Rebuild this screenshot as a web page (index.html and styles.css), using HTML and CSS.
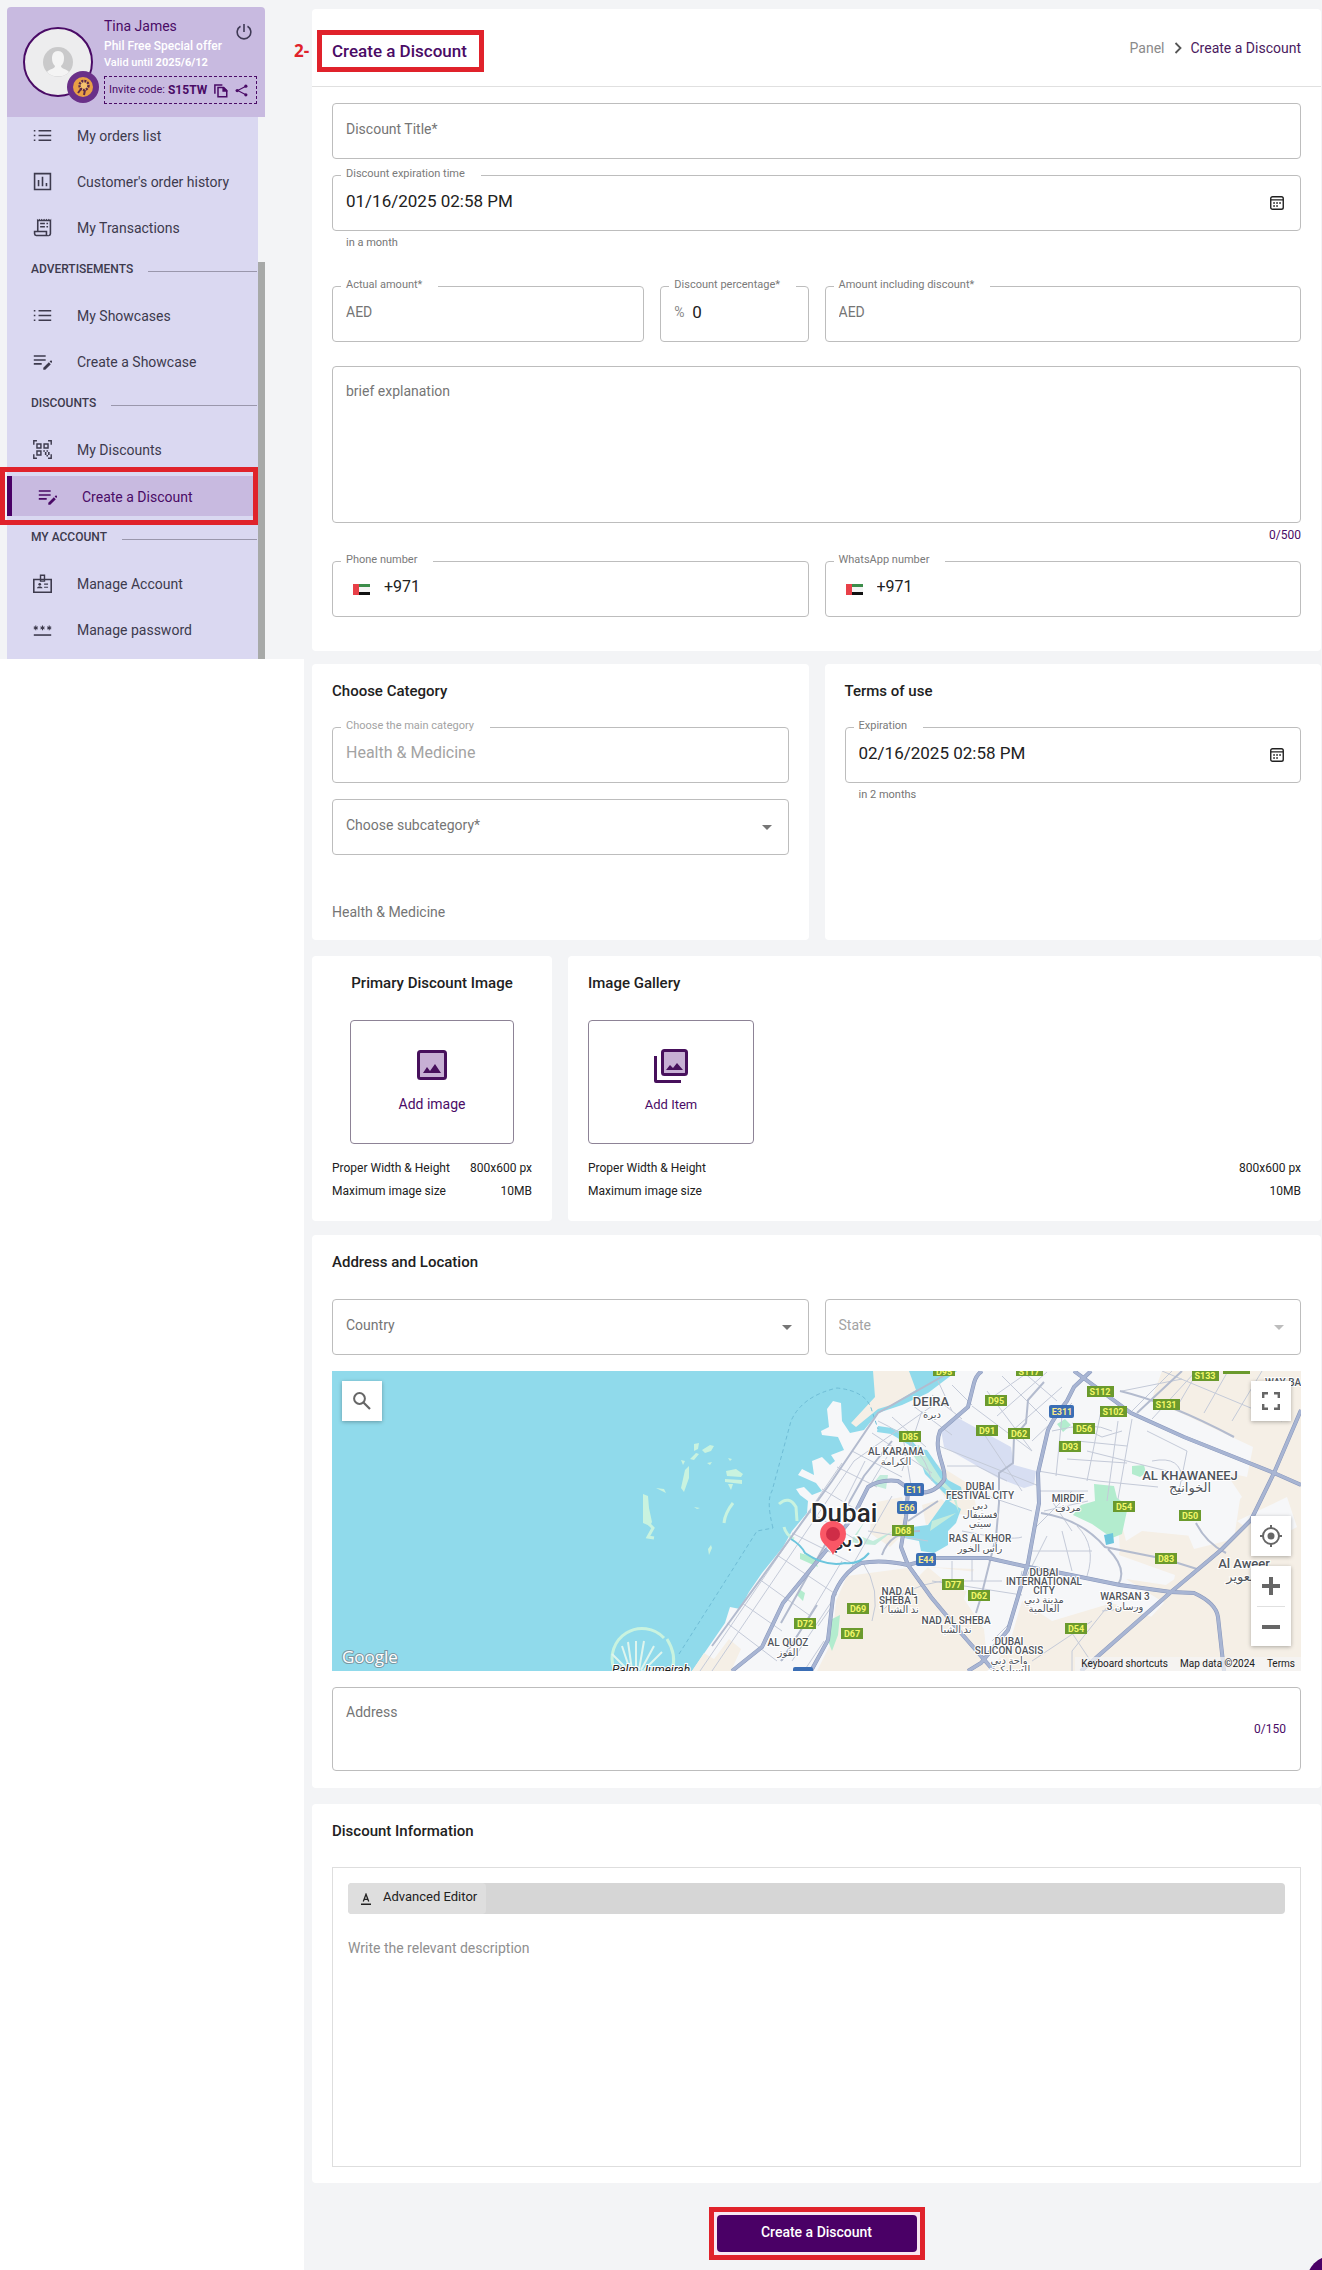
FILE: index.html
```html
<!DOCTYPE html>
<html lang="en">
<head>
<meta charset="utf-8">
<meta name="viewport" content="width=device-width, initial-scale=1">
<title>Create a Discount</title>
<link rel="stylesheet" href="styles.css">
</head>
<body>
<svg width="0" height="0" class="sprite" aria-hidden="true">
  <symbol id="i-list" viewBox="0 0 24 24"><path d="M7 5h16v2H7zM7 11h16v2H7zM7 17h16v2H7zM1 5h2v2H1zM1 11h2v2H1zM1 17h2v2H1z"/></symbol>
  <symbol id="i-chart" viewBox="0 0 24 24"><path d="M1 1h22v22H1zM3 3v18h18V3zM6 10h2v8H6zM11 6h2v12h-2zM16 14h2v4h-2z" fill-rule="evenodd"/></symbol>
  <symbol id="i-receipt" viewBox="0 0 24 24"><path d="M5 1l1.5 1.5L8 1l1.500 1.500L11 1l1.500 1.500L14 1l1.500 1.500L17 1l1.500 1.500L20 1l1.500 1.500L23 1v19a3 3 0 0 1-3 3H4a3 3 0 0 1-3-3v-4h4zM7 4v12h11v4a1 1 0 0 0 2 1 1 1 0 0 0 1-1V4zM3 18v2a1 1 0 0 0 1 1h12v-3zM9 6h6v2H9zM9 10h6v2H9zM17 6h2v2h-2zM17 10h2v2h-2z" fill-rule="evenodd"/></symbol>
  <symbol id="i-edit" viewBox="0 0 24 24"><path d="M1 4h15v2H1zM1 9h15v2H1zM1 14h10v2H1zM20 13l2.500 2.500-7 7H13V20zM21 12l1-1a1 1 0 0 1 1.500 0l.5.500a1 1 0 0 1 0 1.500l-1 1z"/></symbol>
  <symbol id="i-qr" viewBox="0 0 24 24"><g fill="none" stroke="currentColor" stroke-width="1.800"><path d="M1 6V1h4M19 1h4v5M1 18v5h4M19 23h4v-5M5 5h5v5H5zM14 5h5v5h-5zM5 14h5v5H5z"/><path d="M13 14h2m2 0h2m-4 2h2m2 0h2m-6 2h2m2 0h2m-4 2h2" /></g></symbol>
  <symbol id="i-id" viewBox="0 0 24 24"><path d="M1 7h22v16H1z" fill="none" stroke="currentColor" stroke-width="2"/><path d="M9.500 1.500h5V9h-5z" fill="none" stroke="currentColor" stroke-width="1.800"/><circle cx="8.500" cy="13" r="1.700"/><path d="M5 18c0-3 7-3 7 0zM14 12h5v1.500h-5zM14 16h5v1.500h-5z"/></symbol>
  <symbol id="i-pass" viewBox="0 0 24 24"><path d="M1 18h22v2H1z"/><path d="M3.500 7v6M1 8.500l5 3M6 8.500l-5 3M12 7v6M9.500 8.500l5 3M14.500 8.500l-5 3M20.500 7v6M18 8.500l5 3M23 8.500l-5 3" stroke="currentColor" stroke-width="1.300"/></symbol>
  <symbol id="i-cal" viewBox="0 0 14 14"><rect x=".75" y=".75" width="12.500" height="12.500" rx="1.800" fill="none" stroke="currentColor" stroke-width="1.400"/><path d="M1 3.200h12v1.200H1zM3.200 6.200h1.700v1.600H3.200zM6.200 6.200h1.700v1.600H6.200zM9.200 6.200h1.700v1.600H9.200zM3.200 9.200h1.700v1.600H3.200zM6.200 9.200h1.700v1.600H6.200z"/></symbol>
  <symbol id="i-flag" viewBox="0 0 17 11"><path fill="#f4f4f4" d="M0 0h17v11H0z"/><path fill="#3c8d4a" d="M4 0h13v3H4z"/><path fill="#111" d="M4 8h13v3H4z"/><path fill="#e84048" d="M0 0h6v11H0z"/></symbol>
</svg>

<div class="page">
  <div class="side">
    <aside class="side-panel">
      <header class="profile">
        <div class="avatar">
          <svg viewBox="0 0 70 70" width="70" height="70"><circle cx="35" cy="35" r="34" fill="#ededee" stroke="#4a0b66" stroke-width="2"/><circle cx="35" cy="35" r="15" fill="#c9c9ca"/><path d="M35 24c4 0 6 3 6 7s-1 6-3 8c0 3 6 3 8 6-5 6-17 6-22 0 2-3 8-3 8-6-2-2-3-4-3-8s2-7 6-7z" fill="#f4f4f4"/></svg>
          <svg class="medal" viewBox="0 0 32 32" width="32" height="32"><circle cx="16" cy="16" r="16" fill="#6a3088"/><circle cx="16" cy="16" r="10" fill="#e9a045"/><circle cx="17" cy="14.500" r="4.500" fill="#f5c36e" stroke="#5c2a4a" stroke-width="2.400" stroke-dasharray="2 1"/><path d="M14 18l-3 4M18 19l-1 5" stroke="#5c2a4a" stroke-width="2"/></svg>
        </div>
        <div class="who">
          <div class="name">Tina James</div>
          <div class="plan">Phil Free Special offer</div>
          <div class="valid">Valid until <b>2025/6/12</b></div>
          <div class="invite">
            <span>Invite code:</span><b>S15TW</b>
            <button type="button" class="bare copy" aria-label="Copy code"><svg viewBox="0 0 24 24" width="15" height="15"><path d="M3 17V3h12" fill="none" stroke="currentColor" stroke-width="2.400"/><path d="M8 7h9l5 5v10H8z" fill="none" stroke="currentColor" stroke-width="2.400"/><path d="M15 7h3l5 5v2h-8z"/></svg></button>
            <button type="button" class="bare share" aria-label="Share"><svg viewBox="0 0 24 24" width="13" height="13"><path d="M20 4L5 12l15 8" fill="none" stroke="currentColor" stroke-width="2"/><circle cx="20" cy="4" r="3"/><circle cx="4" cy="12" r="3"/><circle cx="20" cy="20" r="3"/></svg></button>
          </div>
        </div>
        <button type="button" class="bare power" aria-label="Log out"><svg viewBox="0 0 16 16" width="16" height="16"><path d="M8 0v8M4.500 2.200a6.800 6.800 0 1 0 7 0" fill="none" stroke="currentColor" stroke-width="1.600"/></svg></button>
      </header>
      <div class="scroller">
        <nav class="menu">
          <a href="#"><svg class="mi"><use href="#i-list"/></svg>My orders list</a>
          <a href="#"><svg class="mi"><use href="#i-chart"/></svg>Customer's order history</a>
          <a href="#"><svg class="mi"><use href="#i-receipt"/></svg>My Transactions</a>
          <h2>ADVERTISEMENTS</h2>
          <a href="#"><svg class="mi"><use href="#i-list"/></svg>My Showcases</a>
          <a href="#"><svg class="mi"><use href="#i-edit"/></svg>Create a Showcase</a>
          <h2>DISCOUNTS</h2>
          <a href="#"><svg class="mi"><use href="#i-qr"/></svg>My Discounts</a>
          <a href="#" class="active"><svg class="mi"><use href="#i-edit"/></svg>Create a Discount</a>
          <h2>MY ACCOUNT</h2>
          <a href="#"><svg class="mi"><use href="#i-id"/></svg>Manage Account</a>
          <a href="#"><svg class="mi"><use href="#i-pass"/></svg>Manage password</a>
        </nav>
        <div class="track"></div>
      </div>
    </aside>
  </div>

  <main>
    <section class="card">
      <header class="head">
        <span class="step">2-</span>
        <h1>Create a Discount</h1>
        <nav class="crumbs"><a href="#">Panel</a><svg viewBox="0 0 8 12" width="8" height="12"><path d="M1.500 1l5 5-5 5" fill="none" stroke="#555" stroke-width="1.800"/></svg><span>Create a Discount</span></nav>
      </header>
      <div class="form">
        <div class="field"><input type="text" placeholder="Discount Title*" aria-label="Discount Title"></div>
        <div class="withhelp">
          <div class="field"><label for="exp">Discount expiration time</label><input id="exp" type="text" class="big" value="01/16/2025 02:58 PM"><svg class="cal"><use href="#i-cal"/></svg></div>
          <p class="help">in a month</p>
        </div>
        <div class="halves amounts">
          <div class="pair">
            <div class="field"><label for="amt">Actual amount*</label><input id="amt" type="text" placeholder="AED"></div>
            <div class="field"><label for="pct">Discount percentage*</label><span class="prefix">%</span><input id="pct" type="text" class="big" value="0"></div>
          </div>
          <div class="field"><label for="net">Amount including discount*</label><input id="net" type="text" placeholder="AED"></div>
        </div>
        <div class="brief">
          <textarea placeholder="brief explanation" aria-label="brief explanation"></textarea>
          <p class="count">0/500</p>
        </div>
        <div class="halves">
          <div class="field tel"><label for="ph">Phone number</label><svg class="flag"><use href="#i-flag"/></svg><input id="ph" type="tel" class="mid" value="+971"></div>
          <div class="field tel"><label for="wa">WhatsApp number</label><svg class="flag"><use href="#i-flag"/></svg><input id="wa" type="tel" class="mid" value="+971"></div>
        </div>
      </div>
    </section>

    <div class="halves">
      <section class="card pad">
        <h3>Choose Category</h3>
        <div class="stack">
          <div class="field off"><label for="cat">Choose the main category</label><input id="cat" type="text" class="mid" value="Health &amp; Medicine" disabled></div>
          <div class="field"><select aria-label="Choose subcategory"><option>Choose subcategory*</option></select><span class="arrow"></span></div>
        </div>
        <p class="chosen">Health &amp; Medicine</p>
      </section>
      <section class="card pad">
        <h3>Terms of use</h3>
        <div class="field"><label for="term">Expiration</label><input id="term" type="text" class="big" value="02/16/2025 02:58 PM"><svg class="cal"><use href="#i-cal"/></svg></div>
        <p class="help">in 2 months</p>
      </section>
    </div>

    <div class="images">
      <section class="card pad primary">
        <h3>Primary Discount Image</h3>
        <button type="button" class="drop"><svg viewBox="0 0 30 30" width="30" height="30"><rect x="1.500" y="1.500" width="27" height="27" rx="2" fill="#c7b0d4" stroke="#47105c" stroke-width="3"/><path d="M6 23l4-6 3 4 5-7 6 9z" fill="#47105c"/></svg>Add image</button>
        <dl><div><dt>Proper Width &amp; Height</dt><dd>800x600 px</dd></div><div><dt>Maximum image size</dt><dd>10MB</dd></div></dl>
      </section>
      <section class="card pad">
        <h3>Image Gallery</h3>
        <button type="button" class="drop small"><svg viewBox="0 0 34 34" width="34" height="34"><rect x="8.500" y="1.500" width="24" height="24" rx="2" fill="#c7b0d4" stroke="#47105c" stroke-width="3"/><path d="M12 21l4-5 3 3 4-5 6 7zM0 7h3v24h24v3H2a2 2 0 0 1-2-2z" fill="#47105c"/></svg>Add Item</button>
        <dl><div><dt>Proper Width &amp; Height</dt><dd>800x600 px</dd></div><div><dt>Maximum image size</dt><dd>10MB</dd></div></dl>
      </section>
    </div>

    <section class="card pad place">
      <h3>Address and Location</h3>
      <div class="stack">
        <div class="halves">
          <div class="field"><select aria-label="Country"><option>Country</option></select><span class="arrow"></span></div>
          <div class="field off"><select aria-label="State" disabled><option>State</option></select><span class="arrow"></span></div>
        </div>
        <div class="map">
          <svg class="tiles" viewBox="0 0 969 300" preserveAspectRatio="xMidYMid slice" role="img" aria-label="Map of Dubai">
            <rect width="969" height="300" fill="#90daeb"/>
            <path fill="#f6f7f9" d="M360 300L393 252 398 236 408 238 417 221 430 202 451 176 460 160 475 142 476 130 468 124 464 118 472 116 480 124 490 120 484 112 466 104 470 98 482 104 480 90 490 86 498 94 503 90 499 84 512 79 506 66 490 64 489 60 497 56 495 38 501 30 509 32 510 50 518 62 532 59 546 42 570 34 596 22 625 0H969V300z"/>
            <path fill="#f5efe6" d="M541 0H577l7 19-25 15-13 4-22 18-5-4 24-26z"/>
            <path fill="#f5efe6" d="M360 300l12-18 10 6 15-20 12 10-10 22zM515 205l60-8 24 30 30 36 33 37H485l15-30 4-40zM540 132l30-6 8 30-20 20-20-14zM590 134l20-6 14 16-30 10zM600 90l40 25 6 30-22-2-20-30zM596 196l46 2-10 30 20 30 4 40h-20l-30-44-26-42zM690 230l30 20 60-18 40 14-40 54H660l20-36zM830 0h139v300H770l69-76 4-20-56-20-2-50 30-8 10-40 90 20 6-30-72-34-30-12z"/>
            <path fill="#f6f7f9" d="M800 60l90 36 20 30-40 40-60-6-16 10-10-40zM846 140l62-12-6 40-40 10zM905 150l50-24 10 30-30 16zM880 60l36 20-10 10-30-10zM740 120l44 0 4 60-20 36-40-10zM596 196l40 4 60 8-10 20-64-10z"/>
            <path fill="#f5efe6" d="M794 208l40 6 52-36 36-32 4 50-60 22-30 16z"/>
            <path fill="#90daeb" d="M546 55l14 2 15 7 12 14 8 1 9 13 12 17 13 7 2 10-14 4 12 8-5 14-8 8v14l-14 8-13-2-2-10-15-3v-10l24-3 10-14 10-14-13-13-10-10-6-17-10-12-18-11-14-2z"/>
            <path fill="#c3ecdc" d="M585 90l-8-12 10-4 22 34 14 14 4 20-8-20-16-12zM533 150l-8 14 16 6 20-10-18 14-26-2zM600 150l24-8-26 18zM548 104l8 0-2 14-14-4z"/>
            <path fill="#d7def2" d="M609 59l17-12 53 29 3 18 22 6-2 14-10 3-26-10-54-31z"/>
            <path fill="#b3ecce" d="M762 113l20 2 3 12 11 8-6 28-10 4-20-14-19-9 8-10 14-4zM800 95l12-1 2 8-6 4-8-3zM725 53l8-5 6 6-8 7zM468 182l14 4 4 10-18-8zM467 218l6 4-2 8-6-6zM500 248l8-4-2 20-6 16-4-10z"/>
            <path fill="#6cc5dd" d="M772 164l9-2 1 10-8 2z"/>
            <path fill="#c9f3df" d="M311 123l5 2 1 12 3 14-2 4-7-3zM362 73l5-1-1 6-4 2zM370 79l8-5 4 1-3 5-6 2zM349 89l4 1-2 4zM358 88l6-6 3 1-5 6zM353 99l4-4 0 12-5 14-3-4zM375 92l5-1-2 3zM396 87l4 1-2 2zM394 100l10-2 7 5-2 3-14-1zM393 108l17 1 0 4-17-2zM396 113h5l-2 6zM362 136l6 1-3 1zM376 178l3-4 1 3-3 7zM324 117l8 1 2 4-4-2z"/>
            <g fill="none" stroke="#c9f3df" stroke-width="3"><path d="M282 298a30 30 0 0 1 50-31M335 268q10 16 5 31" /><path d="M447 133q10-9 17 3l1 14M452 156q2 8 10 12"/><path d="M317 153l4 4-5 9 6 1M392 152q1-10 9-20"/></g>
            <path d="M298 299l-8-24M300 299l-4-28M304 299V270M307 299l5-29M309 299l13-24M312 299l18-18M296 299l-16-16" stroke="#dff5ee" stroke-width="2"/>
            <path d="M347 283L425 160l16-3M441 157Q434 130 440 120L459 50Q470 25 505 17Q535 20 540 40L546 58" fill="none" stroke="#6fbdd6" stroke-dasharray="4 3"/>
            <g fill="none" stroke="#c4cad8">
              <path d="M380 300L522 90 600 35M368 300L510 92M395 252l50 38M410 232l40 28M427 208l50 36M445 184l60 40M460 162l60 30M476 140l50 30M490 118l50 30M505 96l40 20M520 80l50 26M540 62l60 40M560 46l34 30M580 34l40 30M600 24l30 24M620 14l20 20"/>
              <path d="M546 50Q590 70 600 110M533 90l-40 80M555 86l-36 60M570 60l10 60M590 40l-20 60M560 125l-40 70M510 190l-60 100M500 230l-40 60M536 160l60 10M620 40L606 10M630 160q50 10 60 6M640 120l60 20M607 75q50 20 100 40M615 95h30l30 15"/>
              <path d="M655 20L700 80M670 5L715 50M690 0l35 30M655 30l40-28M665 45l50-44M680 60l50-44M700 70l40-38M650 60l40 60M640 35l60 45"/>
              <path d="M720 60q40-10 60 0M706 100l60 10 60 6M730 45l-6 60M740 52l30 14 20-6M745 70l50 5M735 88l60 4M786 50L775 130M770 35L755 110M800 48l-14 80M755 80l80 20M815 60l40 20-8 40M820 90q30-6 30 20"/>
              <path d="M706 120h50M712 140l44-10M700 160l40-40M720 130l20 30M700 180h60M730 160l10 40M715 165l-20 40M745 155q20 20 10 50"/>
              <path d="M800 40l40-40M820 48l44-48M846 34l20-34M872 42l24-42M790 20l60-12M900 50l30-50M830 0l120 50"/>
              <path d="M620 190v18M640 188v22M600 210l90 14M690 200l-10 50-20 20M550 240q20-24 60-30h60M780 230l-40 50 0 20M740 262l20 30M770 240l40-4M700 290l60-40M530 190q20 30 10 60M500 235l-14 20M492 270l-20 30"/>
            </g>
            <g fill="none" stroke="#b3bbce" stroke-width="2">
              <path d="M449 252L532 105 560 70M380 275L500 110 546 42 620 0M709 142q40 6 64 34l60 12 32 10M776 178q20 20 10 36M788 20q50 12 114 46M805 42L850 0M864 152q10 20 30 30M576 150l30-20M588 160q-30 0-38 24M449 290l36-56M712 11l-16 18-2 23-12 14-1 26-14 10v30l-3 34-15 60-5 16"/>
            </g>
            <g fill="none" stroke="#8796ba" stroke-width="4">
              <path d="M400 300L430 276 451 232 492 182 521 146 536 116Q548 108 566 110L580 120Q600 126 612 109C616 98 600 80 608 60L636 36 642 12Q644 4 650 0"/>
              <path d="M479 300L496 269 501 226Q510 202 529 192 550 188 576 194L602 187 656 187 696 196 729 202 788 214 839 221 862 222Q884 232 886 246L892 300"/>
              <path d="M576 120L574 146 569 176 576 194 599 226 629 262 662 300M636 300L649 292 676 259 696 192 707 132 706 102 716 59Q722 46 735 30L742 16 759 0M749 300L839 221 889 179 919 149 942 102 969 39M742 0L799 42 852 66 942 102 969 114"/>
            </g>
            <g fill="none" stroke="#a8b5d3" stroke-width="3">
              <path d="M400 300L430 276 451 232 492 182 521 146 536 116Q548 108 566 110L580 120Q600 126 612 109C616 98 600 80 608 60L636 36 642 12Q644 4 650 0"/>
              <path d="M479 300L496 269 501 226Q510 202 529 192 550 188 576 194L602 187 656 187 696 196 729 202 788 214 839 221 862 222Q884 232 886 246L892 300"/>
              <path d="M576 120L574 146 569 176 576 194 599 226 629 262 662 300M636 300L649 292 676 259 696 192 707 132 706 102 716 59Q722 46 735 30L742 16 759 0M749 300L839 221 889 179 919 149 942 102 969 39M742 0L799 42 852 66 942 102 969 114"/>
            </g>
            <path d="M459 168q10 6 14 14 20 14 40 10 14 2 24-10" fill="none" stroke="#6cc5dd" stroke-width="2"/>
            <g class="shields">
              <g fill="#6b9a2d"><rect x="601" y="-6" width="22" height="11"/><rect x="684" y="-6" width="27" height="11"/><rect x="653" y="24" width="22" height="11"/><rect x="644" y="54" width="22" height="11"/><rect x="676" y="57" width="22" height="11"/><rect x="567" y="60" width="22" height="11"/><rect x="560" y="154" width="22" height="11"/><rect x="610" y="208" width="22" height="11"/><rect x="636" y="219" width="22" height="11"/><rect x="515" y="232" width="22" height="11"/><rect x="462" y="247" width="22" height="11"/><rect x="509" y="257" width="22" height="11"/><rect x="860" y="-1" width="27" height="11"/><rect x="891" y="-8" width="27" height="11"/><rect x="755" y="15" width="27" height="11"/><rect x="768" y="35" width="27" height="11"/><rect x="821" y="28" width="27" height="11"/><rect x="741" y="52" width="22" height="11"/><rect x="727" y="70" width="22" height="11"/><rect x="781" y="130" width="22" height="11"/><rect x="847" y="139" width="22" height="11"/><rect x="823" y="182" width="22" height="11"/><rect x="733" y="252" width="22" height="11"/></g>
              <g fill="#3b6eb5"><rect x="572" y="112" width="20" height="13" rx="2"/><rect x="565" y="130" width="20" height="13" rx="2"/><rect x="584" y="182" width="20" height="13" rx="2"/><rect x="717" y="34" width="25" height="13" rx="2"/><rect x="461" y="296" width="20" height="8" rx="2"/></g>
              <g class="dn"><text x="612" y="4">D95</text><text x="697" y="4">S117</text><text x="664" y="33">D95</text><text x="655" y="63">D91</text><text x="687" y="66">D62</text><text x="578" y="69">D85</text><text x="571" y="163">D68</text><text x="621" y="217">D77</text><text x="647" y="228">D62</text><text x="526" y="241">D69</text><text x="473" y="256">D72</text><text x="520" y="266">D67</text><text x="873" y="8">S133</text><text x="768" y="24">S112</text><text x="781" y="44">S102</text><text x="834" y="37">S131</text><text x="752" y="61">D56</text><text x="738" y="79">D93</text><text x="792" y="139">D54</text><text x="858" y="148">D50</text><text x="834" y="191">D83</text><text x="744" y="261">D54</text></g>
              <g class="en"><text x="582" y="122">E11</text><text x="575" y="140">E66</text><text x="594" y="192">E44</text><text x="730" y="44">E311</text></g>
            </g>
            <g class="area">
              <text x="599" y="35" class="md">DEIRA</text><text x="600" y="47">ديرة</text>
              <text x="564" y="84">AL KARAMA</text><text x="564" y="94">الكرامة</text>
              <text x="648" y="119">DUBAI</text><text x="648" y="128">FESTIVAL CITY</text><text x="648" y="138">دبي</text><text x="648" y="147">فستيفال</text><text x="648" y="156">سيتي</text>
              <text x="648" y="171">RAS AL KHOR</text><text x="648" y="181">رأس الخور</text>
              <text x="567" y="224">NAD AL</text><text x="567" y="233">SHEBA 1</text><text x="567" y="242">ند الشبا 1</text>
              <text x="624" y="253">NAD AL SHEBA</text><text x="624" y="262">ند الشبا</text>
              <text x="456" y="275">AL QUOZ</text><text x="456" y="285">القوز</text>
              <text x="712" y="205">DUBAI</text><text x="712" y="214">INTERNATIONAL</text><text x="712" y="223">CITY</text><text x="712" y="232">مدينة دبي</text><text x="712" y="241">العالمية</text>
              <text x="677" y="274">DUBAI</text><text x="677" y="283">SILICON OASIS</text><text x="677" y="293">واحة دبي</text><text x="677" y="302">للسيليكون</text>
              <text x="736" y="131">MIRDIF</text><text x="736" y="140">مردف</text>
              <text x="858" y="109" class="md">AL KHAWANEEJ</text><text x="858" y="121" class="md">الخوانيج</text>
              <text x="793" y="229">WARSAN 3</text><text x="793" y="239">ورسان 3</text>
              <text x="951" y="15">WAY BA</text><text x="912" y="197" class="md">Al Aweer</text><text x="910" y="210" class="md">العوير</text>
            </g>
            <text x="512" y="151" class="city">Dubai</text><text x="513" y="176" class="city ar">دبي</text>
            <text x="280" y="303" class="palm">Palm Jumeirah</text>
            <path d="M501 184c-3-8-13-11-13-21a13 13 0 0 1 26 0c0 10-10 13-13 21z" fill="#fa5766"/><circle cx="501" cy="163" r="7" fill="#cf2d47"/>
            <text x="10" y="292" class="brand">Google</text>
          </svg>
          <button type="button" class="ctl find" aria-label="Search"><svg viewBox="0 0 18 18" width="18" height="18"><circle cx="6.500" cy="6.500" r="5.400" fill="none" stroke="currentColor" stroke-width="2"/><path d="M10.500 10.500l6.500 6.500" stroke="currentColor" stroke-width="2.200"/></svg></button>
          <div class="ctls">
            <button type="button" class="ctl" aria-label="Full screen"><svg viewBox="0 0 18 18" width="18" height="18"><path d="M1.200 6V1.200H6M12 1.200h4.800V6M16.800 12v4.800H12M6 16.800H1.200V12" fill="none" stroke="currentColor" stroke-width="2.400"/></svg></button>
            <button type="button" class="ctl locate" aria-label="My location"><svg viewBox="0 0 22 22" width="22" height="22"><circle cx="11" cy="11" r="8" fill="none" stroke="currentColor" stroke-width="2"/><circle cx="11" cy="11" r="3.500"/><path d="M11 0v4M11 18v4M0 11h4M18 11h4" stroke="currentColor" stroke-width="2"/></svg></button>
            <div class="zoom"><button type="button" aria-label="Zoom in"><svg viewBox="0 0 18 18" width="18" height="18"><path d="M9 0v18M0 9h18" stroke="currentColor" stroke-width="4"/></svg></button><button type="button" aria-label="Zoom out"><svg viewBox="0 0 18 18" width="18" height="18"><path d="M0 9h18" stroke="currentColor" stroke-width="4"/></svg></button></div>
          </div>
          <div class="legal"><button type="button">Keyboard shortcuts</button><span>Map data ©2024</span><a href="#">Terms</a></div>
        </div>
        <div class="field address"><textarea placeholder="Address" aria-label="Address"></textarea><span class="count">0/150</span></div>
      </div>
    </section>

    <section class="card pad info">
      <h3>Discount Information</h3>
      <div class="editor">
        <div class="bar"><button type="button"><svg viewBox="0 0 12 12" width="12" height="12"><path d="M3.300 8.500L6 1.200l2.700 7.300M4.200 6.300h3.600" fill="none" stroke="currentColor" stroke-width="1.300"/><path d="M1 10.500h10V12H1z"/></svg><span>Advanced Editor</span></button></div>
        <textarea placeholder="Write the relevant description" aria-label="Discount description"></textarea>
      </div>
    </section>

    <div class="submit"><div class="mark"><button type="submit">Create a Discount</button></div></div>
  </main>
</div>
<button type="button" class="chat" aria-label="Chat"></button>
</body>
</html>
```
FILE: styles.css
```css
* { box-sizing: border-box; }

body {
  margin: 0;
  background: #f3f4f6;
  color: #212121;
  font: 14px/20px Roboto, "Liberation Sans", sans-serif;
}

h1, h2, h3, p, dl, dd { margin: 0; }
a { color: inherit; text-decoration: none; }
svg { fill: currentColor; flex: none; }
.sprite { position: absolute; }

button, input, select, textarea {
  font: inherit;
  color: inherit;
  margin: 0;
  padding: 0;
  border: 0;
  background: none;
}

button { cursor: pointer; }
.bare { display: flex; color: inherit; }

.page { display: flex; min-height: 100vh; }

/* Sidebar */
.side { width: 304px; flex: none; background: #fff; }
.side-panel { background: #f3f4f6; padding: 7px 39px 0 7px; }

.profile {
  display: flex;
  position: relative;
  height: 110px;
  padding: 9px 8px 0 16px;
  background: #c8bae0;
  border-radius: 4px 4px 0 0;
  color: #4a0b66;
}

.avatar { position: relative; width: 81px; padding-top: 11px; }
.medal { position: absolute; left: 44px; top: 55px; }
.who { flex: 1; min-width: 0; white-space: nowrap; }
.name { font-size: 14px; }
.plan { color: #fff; font-size: 12px; font-weight: 500; }
.valid { color: #fff; font-size: 11px; line-height: 14px; font-weight: 500; }

.invite {
  display: flex;
  align-items: center;
  gap: 3px;
  height: 28px;
  margin-top: 6px;
  padding: 0 8px 0 4px;
  border: 1px dashed #4a0b66;
  font-size: 11px;
}

.invite b { font-size: 12px; font-weight: 700; }
.copy { margin-left: 3px; }
.share { margin-left: auto; }
.power { position: absolute; right: 13px; top: 17px; color: #3f3a55; }

.scroller { display: flex; }

.menu {
  display: flow-root;
  flex: 1;
  padding-bottom: 7px;
  background: #dad8f1;
  color: #3d3a4d;
}

.menu a {
  display: flex;
  align-items: center;
  gap: 25px;
  height: 46px;
  padding: 1px 0 0 26px;
}

.menu a:first-child { margin-top: -5px; }
.mi { width: 19px; height: 19px; }

.menu h2 {
  display: flex;
  align-items: center;
  gap: 15px;
  height: 42px;
  padding: 0 1px 5px 24px;
  font-size: 12px;
  font-weight: 500;
}

.menu h2::after {
  content: "";
  flex: 1;
  margin-top: 5px;
  border-top: 1px solid #9a97ac;
}

.menu .active {
  position: relative;
  height: 40px;
  margin: 4px 0 2px;
  border-left: 5px solid #4a0066;
  background: #c8bae0;
  color: #4a0b66;
}

.menu .active::after {
  content: "";
  position: absolute;
  inset: -9px 0 -9px -12px;
  border: 5px solid #e0222b;
}

.track { width: 7px; margin-top: 145px; background: #a7a9a8; }

/* Main column */
main {
  flex: 1;
  min-width: 0;
  padding: 9px 1px 10px 8px;
}

.card { background: #fff; border-radius: 4px; }
.pad { padding: 17px 20px 0; }

h3 {
  font-size: 15px;
  line-height: 20px;
  font-weight: 500;
  margin-bottom: 26px;
}

.halves { display: grid; grid-template-columns: 1fr 1fr; gap: 16px; }
.pair { display: grid; grid-template-columns: 312fr 148fr; gap: 16px; }
.stack { display: flex; flex-direction: column; gap: 16px; }

.head {
  display: flex;
  align-items: center;
  height: 78px;
  padding: 6px 20px 0 5px;
  border-bottom: 1px solid #e0e0e0;
}

.step {
  width: 23px;
  margin-left: -23px;
  color: #e0222b;
  font: 700 17px/20px "Open Sans", sans-serif;
}

h1 {
  height: 42px;
  padding: 0 12px 0 10px;
  border: 5px solid #e0222b;
  color: #4a0b66;
  font-size: 17px;
  line-height: 32px;
  font-weight: 500;
}

.crumbs {
  display: flex;
  align-items: center;
  gap: 9px;
  margin-left: auto;
  padding-bottom: 6px;
  color: #4a1a60;
}

.crumbs a { color: #8a8a8a; }

.form { padding: 16px 20px 34px; display: flex; flex-direction: column; gap: 16px; }

.field {
  position: relative;
  display: flex;
  align-items: center;
  height: 56px;
  min-width: 0;
  padding: 0 14px 0 13px;
  border: 1px solid #bdbdbd;
  border-radius: 4px;
}

.field label {
  position: absolute;
  left: 8px;
  top: -9px;
  padding: 0 16px 0 5px;
  background: #fff;
  color: #7a7a7a;
  font-size: 11px;
  line-height: 14px;
}

.field input, .field select {
  flex: 1;
  width: 100%;
  min-width: 0;
  height: 100%;
  padding-bottom: 5px;
  appearance: none;
  outline: none;
}

.field select, ::placeholder { color: #757575; opacity: 1; }
.field .mid { font-size: 16px; }
.field .big { font-size: 17px; }
.off label, .off input, .off select { color: #a3a3a3; opacity: 1; }
.prefix { width: 18px; padding-bottom: 5px; color: #8a8a8a; }
.cal { width: 14px; height: 14px; margin-right: 2px; }
.flag { width: 17px; height: 11px; margin: 0 14px 0 7px; }
.arrow { border: 5px solid transparent; border-top-color: #757575; border-bottom: 0; margin-right: 2px; }
.off .arrow { border-top-color: #bdbdbd; }

.help { margin-top: 2px; padding-left: 14px; color: #757575; font-size: 11px; }
.amounts { margin-top: 17px; }

.brief textarea {
  display: block;
  width: 100%;
  height: 157px;
  margin-top: 8px;
  padding: 14px 13px;
  border: 1px solid #bdbdbd;
  border-radius: 4px;
  resize: none;
}

.count { color: #4a0b66; font-size: 12px; text-align: right; }
.brief .count { padding: 2px 0 0; }

.card + .halves { margin-top: 13px; }
.halves > .pad { min-height: 276px; }
.chosen { margin: 47px 0 17px; color: #757575; }

.images { display: grid; grid-template-columns: 240fr 753fr; gap: 16px; margin-top: 16px; }
.images .pad { padding-bottom: 18px; }
.images h3 { margin-bottom: 27px; }
.primary h3 { text-align: center; }

.drop {
  display: flex;
  flex-direction: column;
  align-items: center;
  justify-content: center;
  gap: 14px;
  width: 164px;
  height: 124px;
  border: 1px solid #8d8396;
  border-radius: 4px;
  color: #4a0b66;
}

.primary .drop { margin: 0 auto; }
.small { width: 166px; font-size: 13px; gap: 12px; }

.images dl { margin-top: 13px; font-size: 12px; }
.images dl div { display: flex; justify-content: space-between; line-height: 23px; }

.place { margin-top: 14px; padding-bottom: 17px; }
.place h3 { margin-bottom: 27px; }

/* Map */
.map { position: relative; height: 300px; overflow: hidden; }
.tiles { display: block; width: 100%; height: 100%; }
.tiles text { text-anchor: middle; }
.dn text { fill: #f2f76a; font-size: 9px; font-weight: 700; }
.en text { fill: #fbe98a; font-size: 9px; font-weight: 700; }
.area text {
  fill: #50545b;
  font: 500 10px Roboto, "DejaVu Sans", sans-serif;
  stroke: #fff;
  stroke-width: 2px;
  paint-order: stroke;
}
.area .md { font-size: 13px; }
.tiles .city { fill: #26282c; font: 500 26px Roboto, sans-serif; stroke: #fff; stroke-width: 3px; paint-order: stroke; }
.tiles .ar { font: 24px "DejaVu Sans", sans-serif; }
.tiles .palm { fill: #222; font-size: 12px; font-style: italic; text-anchor: start; stroke: #fff; stroke-width: 2px; paint-order: stroke; }
.tiles .brand { fill: #fff; font: 500 17px "Open Sans", sans-serif; text-anchor: start; stroke: #7c98a3; stroke-width: 2px; paint-order: stroke; }

.ctl, .zoom { width: 40px; background: #fff; box-shadow: 0 1px 4px rgba(0, 0, 0, .3); color: #666; }
.ctl { display: grid; place-items: center; height: 40px; }
.find { position: absolute; left: 10px; top: 10px; }
.ctls { position: absolute; right: 10px; top: 10px; }
.locate { margin: 95px 0 10px; }
.zoom button { display: grid; place-items: center; width: 28px; height: 40px; margin: 0 6px; color: #666; }
.zoom button + button { border-top: 1px solid #e0e0e0; }

.legal {
  position: absolute;
  right: 0;
  bottom: 0;
  display: flex;
  gap: 12px;
  padding: 0 6px;
  background: rgba(245, 245, 245, .7);
  font-size: 10px;
  line-height: 14px;
}

.address { height: 84px; padding-left: 0; }
.address textarea { flex: 1; height: 82px; padding: 14px 13px; resize: none; }
.address .count { font-size: 12px; }

.info { margin-top: 16px; padding-bottom: 16px; }
.editor { height: 300px; padding: 15px; border: 1px solid #dedede; }
.bar { background: #d6d6d6; border-radius: 4px; font-size: 13px; }
.bar button { display: flex; align-items: center; gap: 11px; height: 31px; padding: 0 9px 0 12px; background: #dedede; border-radius: 4px; }
.bar span { padding-bottom: 4px; }
.editor textarea { display: block; width: 100%; height: 200px; margin-top: 24px; resize: none; }
.editor ::placeholder { color: #8f8f8f; }

.submit { display: flex; justify-content: center; margin-top: 24px; }
.mark { padding: 3px; border: 5px solid #e0222b; background: #f8e6f0; }
.mark button { display: block; width: 200px; height: 37px; padding-bottom: 3px; background: #4a0066; border-radius: 4px; color: #fff; font-weight: 500; }

.chat {
  position: fixed;
  right: -40px;
  bottom: -41px;
  width: 56px;
  height: 56px;
  border-radius: 50%;
  background: #4a0066;
}
```
